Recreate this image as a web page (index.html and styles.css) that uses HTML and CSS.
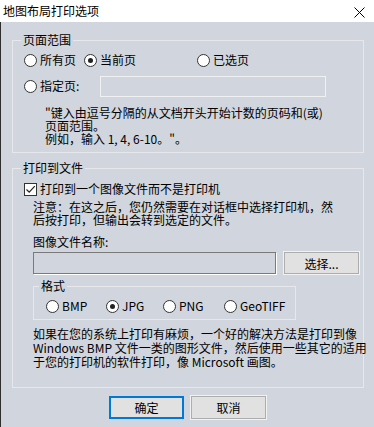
FILE: index.html
```html
<!DOCTYPE html>
<html lang="zh-CN">
<head>
    <meta charset="UTF-8">
    <title>地图布局打印选项</title>
    <link rel="stylesheet" href="styles.css">
</head>
<body>
    <div class="window">
        <div class="titlebar">
            <span class="title">地图布局打印选项</span>
            <svg class="close" width="11" height="11" viewBox="0 0 11 11">
                <path d="M0.5 0.5 L10.5 10.5 M10.5 0.5 L0.5 10.5" stroke="#000" stroke-width="1" fill="none"/>
            </svg>
        </div>

        <div class="content">
            <fieldset class="group range">
                <legend>页面范围</legend>
                <div class="row first">
                    <label class="opt w-all"><span class="radio"></span>所有页</label>
                    <label class="opt w-cur"><span class="radio checked"></span>当前页</label>
                    <label class="opt"><span class="radio"></span>已选页</label>
                </div>
                <div class="row pages">
                    <label class="opt w-pages"><span class="radio"></span>指定页:</label>
                    <div class="field disabled"></div>
                </div>
                <p class="hint">"键入由逗号分隔的从文档开头开始计数的页码和(或)<br>页面范围。<br>例如，输入 1, 4, 6-10。"。</p>
            </fieldset>

            <fieldset class="group tofile">
                <legend>打印到文件</legend>
                <div class="row check-row">
                    <label class="opt">
                        <span class="checkbox">
                            <svg width="11" height="11" viewBox="0 0 11 11">
                                <path d="M1.5 5.5 L4.2 8.2 L9.8 2.2" stroke="#222" stroke-width="1.2" fill="none"/>
                            </svg>
                        </span>打印到一个图像文件而不是打印机
                    </label>
                </div>
                <p class="note">注意：在这之后，您仍然需要在对话框中选择打印机，然<br>后按打印，但输出会转到选定的文件。</p>
                <div class="file-label">图像文件名称:</div>
                <div class="row file-row">
                    <div class="field path"></div>
                    <button class="btn browse">选择...</button>
                </div>

                <fieldset class="group format">
                    <legend>格式</legend>
                    <div class="row fmt-row">
                        <label class="opt w-bmp"><span class="radio"></span>BMP</label>
                        <label class="opt w-jpg"><span class="radio checked"></span>JPG</label>
                        <label class="opt w-png"><span class="radio"></span>PNG</label>
                        <label class="opt"><span class="radio"></span>GeoTIFF</label>
                    </div>
                </fieldset>

                <p class="tip">如果在您的系统上打印有麻烦，一个好的解决方法是打印到像<br>Windows BMP 文件一类的图形文件，然后使用一些其它的适用<br>于您的打印机的软件打印，像 Microsoft 画图。</p>
            </fieldset>

            <div class="actions">
                <button class="btn ok">确定</button>
                <button class="btn">取消</button>
            </div>
        </div>
    </div>
</body>
</html>
```

FILE: styles.css
```css
html, body {
    margin: 0;
    padding: 0;
}
body {
    width: 374px;
    height: 427px;
    overflow: hidden;
    font-family: "Noto Sans CJK SC", "Microsoft YaHei", sans-serif;
    font-size: 12px;
    color: #000;
    background: #d1d5dd;
}
.titlebar {
    height: 22px;
    background: #fff;
    display: flex;
    align-items: center;
    justify-content: space-between;
    padding: 0 9px 0 3px;
}
.title {
    font-size: 12px;
    line-height: 14px;
}
.close {
    display: block;
    margin-top: 2px;
}
.content {
    height: 405px;
    box-sizing: border-box;
    border-left: 1px solid #2e2e2e;
    padding: 11px 0 0 11px;
}
.group {
    margin: 0;
    min-width: 0;
    border: 1px solid #e6e8ec;
    padding: 0 0 0 11px;
}
.group legend {
    padding: 0 2px;
    line-height: 14px;
    margin-left: -3px;
}
.range {
    width: 352px;
    box-sizing: border-box;
    padding-top: 3px;
    padding-bottom: 7px;
}
.row {
    display: flex;
    align-items: center;
}
.first {
    height: 20px;
}
.pages {
    height: 22px;
    margin-top: 5px;
}
.opt {
    display: flex;
    align-items: center;
    white-space: nowrap;
    line-height: 14px;
}
.w-all { width: 60px; }
.w-cur { width: 113px; }
.w-pages { width: 76px; }
.w-bmp { width: 60px; }
.w-jpg { width: 57px; }
.w-png { width: 61px; }
.radio {
    width: 11px;
    height: 11px;
    border: 1px solid #333;
    border-radius: 50%;
    background: #fff;
    margin-right: 3px;
    position: relative;
    flex: none;
}
.radio.checked::after {
    content: "";
    position: absolute;
    left: 3px;
    top: 3px;
    width: 5px;
    height: 5px;
    border-radius: 50%;
    background: #222;
}
.checkbox {
    width: 11px;
    height: 11px;
    border: 1px solid #333;
    background: #fff;
    margin-right: 3px;
    flex: none;
    display: flex;
}
.field {
    box-sizing: border-box;
    height: 21px;
}
.field.disabled {
    width: 226px;
    border: 1px solid #f0f1f3;
}
.hint {
    margin: 9px 0 0 21px;
    line-height: 13px;
    white-space: nowrap;
}
.tofile {
    width: 352px;
    box-sizing: border-box;
    margin-top: 8px;
    padding-top: 5px;
    padding-bottom: 18px;
}
.check-row {
    height: 18px;
}
.note {
    margin: 2px 0 0 9px;
    line-height: 13px;
    white-space: nowrap;
}
.file-label {
    margin: 9px 0 0 9px;
    line-height: 14px;
}
.file-row {
    margin: 3px 0 0 9px;
    gap: 8px;
}
.field.path {
    width: 243px;
    height: 22px;
    border: 1px solid #7a7a7a;
    box-shadow: 1px 1px 0 #fff;
}
.btn {
    font: inherit;
    color: #000;
    width: 75px;
    height: 22px;
    padding: 0;
    background: #e1e1e1;
    border: 1px solid #adadad;
    box-shadow: 0 0 0 1px #f2f2f2;
}
.format {
    width: 263px;
    box-sizing: border-box;
    margin: 5px 0 0 9px;
    padding: 4px 0 4px 12px;
}
.format legend {
    margin-left: -7px;
}
.fmt-row {
    height: 18px;
}
.tip {
    margin: 7px 0 0 9px;
    line-height: 14px;
    white-space: nowrap;
}
.actions {
    display: flex;
    gap: 7px;
    margin: 8px 0 0 97px;
}
.actions .btn {
    height: 23px;
}
.btn.ok {
    border: 2px solid #0078d7;
    box-shadow: none;
}
```
